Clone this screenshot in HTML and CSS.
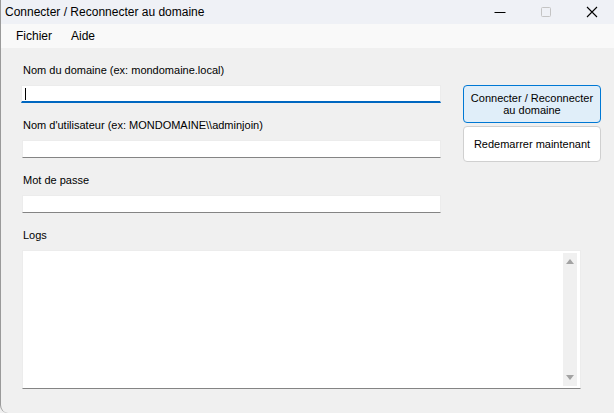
FILE: index.html
```html
<!DOCTYPE html>
<html lang="fr">
<head>
<meta charset="utf-8">
<title>Connecter / Reconnecter au domaine</title>
<link rel="stylesheet" href="styles.css">
</head>
<body>
<div class="window">
  <div class="titlebar">
    <span class="title">Connecter / Reconnecter au domaine</span>
    <div class="controls">
      <span class="ctl"><svg width="12" height="12" viewBox="0 0 12 12"><path d="M0.5 6.5h11" stroke="#000" stroke-width="1"/></svg></span>
      <span class="ctl"><svg width="12" height="12" viewBox="0 0 12 12"><rect x="1.5" y="1.5" width="9" height="9" rx="1" fill="none" stroke="#c4c4c4" stroke-width="1"/></svg></span>
      <span class="ctl"><svg width="12" height="12" viewBox="0 0 12 12"><path d="M1 1L11 11M11 1L1 11" stroke="#000" stroke-width="1.1"/></svg></span>
    </div>
  </div>
  <div class="menubar">
    <span class="menu-item">Fichier</span>
    <span class="menu-item">Aide</span>
  </div>
  <div class="content">
    <div class="top">
      <div class="fields">
        <div class="field">
          <div class="label">Nom du domaine (ex: mondomaine.local)</div>
          <div class="input focused"><span class="caret"></span></div>
        </div>
        <div class="field">
          <div class="label">Nom d'utilisateur (ex: MONDOMAINE\\adminjoin)</div>
          <div class="input"></div>
        </div>
        <div class="field">
          <div class="label">Mot de passe</div>
          <div class="input"></div>
        </div>
      </div>
      <div class="buttons">
        <div class="btn primary">Connecter / Reconnecter<br>au domaine</div>
        <div class="btn secondary">Redemarrer maintenant</div>
      </div>
    </div>
    <div class="logs-field">
      <div class="label">Logs</div>
      <div class="logs">
        <div class="logs-text"></div>
        <div class="scrollbar">
          <span class="arrow up"></span>
          <span class="arrow down"></span>
        </div>
      </div>
    </div>
  </div>
</div>
</body>
</html>
```
FILE: styles.css
```css
html, body {
  margin: 0;
  padding: 0;
  width: 614px;
  height: 413px;
  overflow: hidden;
  background: #f0f0f0;
}
.window {
  width: 614px;
  height: 413px;
  box-sizing: border-box;
  border-left: 1px solid #9a9a9a;
  border-bottom-left-radius: 8px;
  background: #f0f0f0;
  display: flex;
  flex-direction: column;
  font-family: "Liberation Sans", Arial, sans-serif;
  color: #000;
}
.titlebar {
  height: 24px;
  flex: none;
  background: #eff1f6;
  display: flex;
  align-items: center;
  justify-content: space-between;
}
.title {
  font-size: 12px;
  padding-left: 4px;
  margin-top: -1px;
  color: #000;
}
.controls {
  display: flex;
  align-items: center;
  gap: 34px;
  padding-right: 16px;
}
.ctl {
  display: flex;
  width: 12px;
  height: 12px;
}
.menubar {
  height: 24px;
  flex: none;
  background: #f9f9f9;
  display: flex;
  align-items: center;
  padding-left: 15px;
  gap: 19px;
  font-size: 12px;
}
.content {
  padding: 16px 0 0 21px;
  display: flex;
  flex-direction: column;
}
.top {
  display: flex;
  gap: 22px;
}
.fields {
  width: 419px;
  display: flex;
  flex-direction: column;
  gap: 16px;
}
.field {
  display: flex;
  flex-direction: column;
}
.label {
  font-size: 11px;
  line-height: 13px;
  height: 13px;
  margin-bottom: 8px;
  padding-left: 1px;
}
.input {
  height: 18px;
  box-sizing: border-box;
  background: #fff;
  border: 1px solid #ececec;
  border-bottom: 1px solid #848484;
  position: relative;
}
.input.focused {
  border-bottom: 2px solid #0067c0;
  margin-left: -1px;
}
.caret {
  position: absolute;
  left: 3px;
  top: 2px;
  width: 1px;
  height: 12px;
  background: #000;
}
.buttons {
  width: 138px;
  margin-top: 21px;
  display: flex;
  flex-direction: column;
  gap: 3px;
}
.btn {
  box-sizing: border-box;
  border-radius: 4px;
  font-size: 11px;
  line-height: 12px;
  text-align: center;
  display: flex;
  align-items: center;
  justify-content: center;
}
.btn.primary {
  height: 38px;
  background: #e0eef9;
  border: 1px solid #0078d4;
}
.btn.secondary {
  height: 36px;
  background: #fff;
  border: 1px solid #d0d0d0;
}
.logs-field {
  margin-top: 16px;
  display: flex;
  flex-direction: column;
}
.logs {
  width: 559px;
  height: 139px;
  box-sizing: border-box;
  background: #fff;
  border: 1px solid #ececec;
  border-bottom: 1px solid #848484;
  display: flex;
  justify-content: flex-end;
  padding: 2px 3px 2px 0;
}
.logs-text {
  flex: 1;
}
.scrollbar {
  width: 14px;
  background: #f0f0f0;
  position: relative;
}
.arrow {
  position: absolute;
  left: 3px;
  width: 0;
  height: 0;
  border-left: 4px solid transparent;
  border-right: 4px solid transparent;
}
.arrow.up {
  top: 6px;
  border-bottom: 5px solid #a3a3a3;
}
.arrow.down {
  bottom: 6px;
  border-top: 5px solid #a3a3a3;
}
```
